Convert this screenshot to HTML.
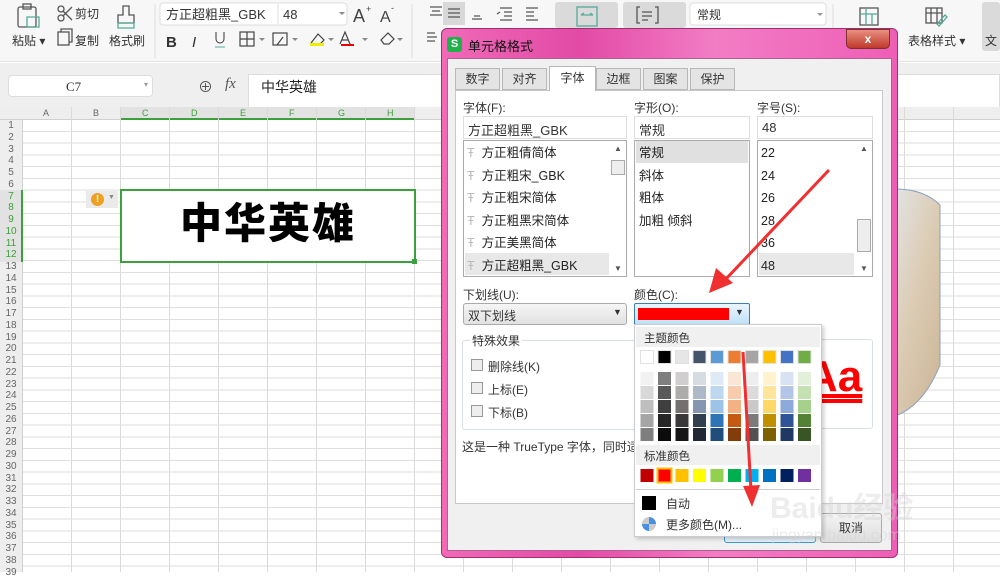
<!DOCTYPE html>
<html><head><meta charset="utf-8"><style>
*{box-sizing:border-box;margin:0;padding:0}
body{width:1000px;height:572px;overflow:hidden;position:relative;background:#fff;font-family:"Liberation Sans","Noto Sans CJK SC",sans-serif;font-size:12px;color:#333}
.a{position:absolute}
.t{position:absolute;white-space:nowrap}
</style></head><body>
<!-- ribbon -->
<div class="a" style="left:0;top:0;width:1000px;height:62px;background:#f7f7f7;border-bottom:1px solid #e3e3e3"></div>
<svg class="a" style="left:0;top:0" width="1000" height="62">
<g fill="none" stroke="#555" stroke-width="1.3">
<rect x="18" y="7" width="18" height="20" rx="2"/><rect x="23" y="4" width="8" height="5"/>
<path d="M27 17h12v10h-12z" stroke="#5a9"/>
<circle cx="61" cy="18" r="3"/><circle cx="61" cy="9" r="3"/><path d="M63 16l9-9M63 11l9 9"/>
<rect x="58" y="32" width="11" height="13"/><path d="M61 32v-3h11v13h-3"/>
<path d="M123 6h6v9h5v8h-16v-8h5z"/><path d="M118 23h16v5h-16z" stroke="#5a9"/>
<path d="M430 7h12M432 11h8M430 15h12"/><rect x="443" y="2" width="22" height="23" fill="#d8d8d8" stroke="none"/><path d="M448 9h12M448 13h12M448 17h12"/>
<path d="M474 16h6M472 19h10"/><path d="M500 8h12M504 12h8M504 16h8M500 20h12M497 14l3-2"/><path d="M526 8h12M526 12h8M526 16h8M526 20h12"/>
<path d="M427 33h8M427 37h10M427 41h8"/>
</g>
<rect x="555" y="2" width="63" height="26" rx="3" fill="#dadada"/><rect x="623" y="2" width="63" height="26" rx="3" fill="#dadada"/>
<g fill="none" stroke="#5a9" stroke-width="1.3"><rect x="577" y="7" width="20" height="19"/><path d="M581 15h12M581 15l3-2M593 15l-3-2"/></g>
<g fill="none" stroke="#555" stroke-width="1.3"><path d="M640 7h-3v16h3M655 7h3v16h-3M642 12h10M642 16h10M642 20h6"/></g>
<rect x="160" y="3" width="187" height="22" rx="3" fill="#fff" stroke="#ddd"/><line x1="278" y1="4" x2="278" y2="24" stroke="#ddd"/>
<text x="166" y="19" font-size="13" fill="#333">方正超粗黑_GBK</text><text x="283" y="19" font-size="13" fill="#333">48</text>
<text x="353" y="22" font-size="18" fill="#444">A</text><text x="366" y="12" font-size="9" fill="#444">+</text>
<text x="380" y="22" font-size="16" fill="#444">A</text><text x="391" y="11" font-size="9" fill="#444">-</text>
<text x="166" y="47" font-size="15" font-weight="bold" fill="#333">B</text><text x="192" y="47" font-size="15" font-style="italic" fill="#333">I</text>
<path d="M216 32v7a4 4 0 0 0 8 0v-7" fill="none" stroke="#333"/><path d="M215 47h10" stroke="#5a9"/>
<g fill="none" stroke="#444" stroke-width="1.2"><rect x="240" y="32" width="14" height="14"/><path d="M247 32v14M240 39h14"/><rect x="273" y="33" width="14" height="12"/><path d="M277 45l6-8"/><path d="M311 43l7-9 6 6-4 4"/><path d="M340 44l5-12 5 12M342 40h6"/><path d="M381 40l7-7 6 6-5 5h-5z"/></g>
<rect x="310" y="43" width="14" height="3" fill="#ee0"/><rect x="341" y="44" width="13" height="2" fill="#e00"/>
<g fill="#888"><path d="M259 38l3 3 3-3z"/><path d="M292 38l3 3 3-3z"/><path d="M328 38l3 3 3-3z"/><path d="M362 38l3 3 3-3z"/><path d="M397 38l3 3 3-3z"/><path d="M339 12l3 3 3-3z"/></g>
<line x1="155" y1="4" x2="155" y2="58" stroke="#ddd"/><line x1="412" y1="4" x2="412" y2="58" stroke="#ddd"/><line x1="833" y1="4" x2="833" y2="58" stroke="#ddd"/>
<rect x="690" y="3" width="136" height="22" rx="3" fill="#fff" stroke="#ddd"/><text x="697" y="19" font-size="12" fill="#333">常规</text><path d="M817 13l3 3 3-3z" fill="#999"/>
<g fill="none" stroke="#555" stroke-width="1.3"><rect x="860" y="8" width="18" height="17"/><path d="M860 14h18M866 8v17M872 14v11" stroke="#5a9"/><rect x="926" y="8" width="16" height="15"/><path d="M926 13h16M931 8v15M937 8v15"/><path d="M937 24l8-9 2 2-8 9z" stroke="#5a9"/></g>
<rect x="982" y="2" width="18" height="49" rx="3" fill="#dadada"/>
<text x="12" y="45" font-size="12" fill="#333">粘贴 ▾</text><text x="75" y="18" font-size="12" fill="#333">剪切</text><text x="75" y="45" font-size="12" fill="#333">复制</text><text x="109" y="45" font-size="12" fill="#333">格式刷</text>
<text x="908" y="45" font-size="12" fill="#333">表格样式 ▾</text><text x="985" y="45" font-size="12" fill="#333">文</text>
</svg>
<!-- formula bar -->
<div class="a" style="left:0;top:63px;width:1000px;height:45px;background:#efefef"></div>
<div class="a" style="left:8px;top:75px;width:145px;height:22px;background:#fff;border:1px solid #ddd;border-radius:4px"></div>
<div class="t" style="left:66px;top:79px;font-family:'Liberation Serif',serif;font-size:13px">C7</div><div class="t" style="left:144px;top:80px;font-size:8px;color:#999">▾</div>
<div class="t" style="left:198px;top:76px;font-size:15px;color:#555">⊕</div><div class="t" style="left:225px;top:76px;font-size:15px;font-style:italic;color:#555;font-family:'Liberation Serif',serif">fx</div>
<div class="a" style="left:248px;top:74px;width:752px;height:36px;background:#fff;border:1px solid #ddd"></div>
<div class="t" style="left:261px;top:77px;font-size:14px;color:#222">中华英雄</div>
<!-- sheet -->
<div class="a" style="left:0;top:107px;width:1000px;height:13px;background:#eee;border-bottom:1px solid #d0d0d0"></div>
<div class="a" style="left:120px;top:107px;width:295px;height:13px;background:#e2e2e2;border-bottom:2px solid #3ca03c"></div>
<div class="a" style="left:0;top:120px;width:23px;height:452px;background:#eee;border-right:1px solid #d0d0d0"></div>
<div class="a" style="left:0;top:190px;width:23px;height:72px;background:#e2e2e2;border-right:2px solid #3ca03c"></div>
<div class="a" style="left:23px;top:107px;width:977px;height:465px;background-image:repeating-linear-gradient(to right,transparent 0 48px,#dadada 48px 49px)"></div>
<div class="a" style="left:23px;top:120px;width:977px;height:452px;background-image:repeating-linear-gradient(to bottom,transparent 0 10.75px,#dedede 10.75px 11.75px)"></div>
<div class="t" style="left:43px;top:108px;font-size:9px;color:#666">A</div><div class="t" style="left:93px;top:108px;font-size:9px;color:#666">B</div>
<div class="t" style="left:142px;top:108px;font-size:9px;color:#3ca03c">C</div><div class="t" style="left:191px;top:108px;font-size:9px;color:#3ca03c">D</div><div class="t" style="left:240px;top:108px;font-size:9px;color:#3ca03c">E</div><div class="t" style="left:289px;top:108px;font-size:9px;color:#3ca03c">F</div><div class="t" style="left:338px;top:108px;font-size:9px;color:#3ca03c">G</div><div class="t" style="left:387px;top:108px;font-size:9px;color:#3ca03c">H</div>
<div class="a" style="left:2px;top:120px;width:18px;font-size:10px;line-height:11.75px;text-align:center;color:#666">1<br>2<br>3<br>4<br>5<br>6<br><span style="color:#3ca03c">7<br>8<br>9<br>10<br>11<br>12</span><br>13<br>14<br>15<br>16<br>17<br>18<br>19<br>20<br>21<br>22<br>23<br>24<br>25<br>26<br>27<br>28<br>29<br>30<br>31<br>32<br>33<br>34<br>35<br>36<br>37<br>38<br>39</div>
<div class="a" style="left:120px;top:189px;width:296px;height:74px;background:#fff;border:2px solid #3ca03c"></div>
<div class="a" style="left:412px;top:259px;width:5px;height:5px;background:#3ca03c"></div>
<div class="t" style="left:120px;top:192px;width:296px;text-align:center;font-family:'Noto Sans CJK SC',sans-serif;font-weight:900;font-size:42px;line-height:58px;color:#000;letter-spacing:2px">中华英雄</div>
<div class="a" style="left:86px;top:191px;width:32px;height:17px;background:#eaeaea"></div>
<div class="a" style="left:91px;top:193px;width:13px;height:13px;border-radius:50%;background:#f0a020;color:#fff;font-size:10px;font-weight:bold;text-align:center;line-height:13px">!</div>
<div class="t" style="left:108px;top:194px;font-size:7px;color:#888">▼</div>
<!-- background image right -->
<svg class="a" style="left:880px;top:185px" width="120" height="240"><defs><linearGradient id="g" x1="0" y1="0" x2="1" y2="1"><stop offset="0" stop-color="#e4ebf3"/><stop offset=".5" stop-color="#dccdb6"/><stop offset="1" stop-color="#cbb394"/></linearGradient></defs><path d="M0 5 Q40 0 60 20 L60 180 Q40 230 0 235 Z" fill="url(#g)" stroke="#8aa0c0"/></svg>
<!-- dialog -->
<div class="a" style="left:441px;top:28px;width:457px;height:530px;border-radius:6px;background:linear-gradient(90deg,#f06ab8,#e24aa6 30%,#f27dc4 60%,#ee5eb6);border:1px solid #a03070"></div>
<div class="a" style="left:447px;top:58px;width:445px;height:493px;background:#f0f0f0;border:1px solid #b06090"></div>
<div class="a" style="left:447px;top:37px;width:15px;height:15px;border-radius:3px;background:#22b04a;color:#fff;font-weight:bold;font-size:11px;text-align:center;line-height:15px">S</div>
<div class="t" style="left:468px;top:36px;font-size:13px;color:#111">单元格格式</div>
<div class="a" style="left:846px;top:29px;width:44px;height:20px;border-radius:0 0 5px 5px;background:linear-gradient(#e89080,#c0392b);border:1px solid #803030;color:#fff;text-align:center;font-weight:bold;font-size:12px;line-height:18px">x</div>
<div class="a" style="left:455px;top:90px;width:428px;height:414px;background:#fff;border:1px solid #c8c8c8"></div>
<div class="a" style="left:455px;top:68px;width:45px;height:22px;background:#e4e4e4;border:1px solid #b8b8b8;text-align:center;line-height:20px">数字</div>
<div class="a" style="left:502px;top:68px;width:45px;height:22px;background:#e4e4e4;border:1px solid #b8b8b8;text-align:center;line-height:20px">对齐</div>
<div class="a" style="left:549px;top:66px;width:47px;height:25px;background:#fff;border:1px solid #b8b8b8;border-bottom:none;text-align:center;line-height:22px">字体</div>
<div class="a" style="left:596px;top:68px;width:45px;height:22px;background:#e4e4e4;border:1px solid #b8b8b8;text-align:center;line-height:20px">边框</div>
<div class="a" style="left:643px;top:68px;width:45px;height:22px;background:#e4e4e4;border:1px solid #b8b8b8;text-align:center;line-height:20px">图案</div>
<div class="a" style="left:690px;top:68px;width:45px;height:22px;background:#e4e4e4;border:1px solid #b8b8b8;text-align:center;line-height:20px">保护</div>
<div class="t" style="left:463px;top:99px">字体(F):</div><div class="t" style="left:634px;top:99px">字形(O):</div><div class="t" style="left:757px;top:99px">字号(S):</div>
<div class="a" style="left:463px;top:116px;width:164px;height:23px;border:1px solid #ddd;padding:3px 4px;font-size:13px">方正超粗黑_GBK</div>
<div class="a" style="left:634px;top:116px;width:116px;height:23px;border:1px solid #ddd;padding:3px 4px;font-size:13px">常规</div>
<div class="a" style="left:757px;top:116px;width:116px;height:23px;border:1px solid #ddd;padding:3px 4px;font-size:13px">48</div>
<div class="a" style="left:463px;top:140px;width:164px;height:137px;border:1px solid #aaa"></div>
<div class="a" style="left:465px;top:253px;width:144px;height:22px;background:#e8e8e8"></div>
<div class="a" style="left:611px;top:160px;width:14px;height:15px;background:#eee;border:1px solid #aaa"></div>
<div class="t" style="left:614px;top:144px;font-size:8px;color:#555">▲</div><div class="t" style="left:614px;top:264px;font-size:8px;color:#555">▼</div>
<div class="a" style="left:467px;top:142px;font-size:12.5px;line-height:22.5px;color:#222"><span style="color:#bbb">Ŧ</span>&nbsp; 方正粗倩简体<br><span style="color:#bbb">Ŧ</span>&nbsp; 方正粗宋_GBK<br><span style="color:#bbb">Ŧ</span>&nbsp; 方正粗宋简体<br><span style="color:#bbb">Ŧ</span>&nbsp; 方正粗黑宋简体<br><span style="color:#bbb">Ŧ</span>&nbsp; 方正美黑简体<br><span style="color:#bbb">Ŧ</span>&nbsp; 方正超粗黑_GBK</div>
<div class="a" style="left:634px;top:140px;width:116px;height:137px;border:1px solid #aaa"></div>
<div class="a" style="left:636px;top:141px;width:112px;height:22px;background:#e0e0e0"></div>
<div class="a" style="left:639px;top:142px;font-size:12.5px;line-height:22.5px;color:#222">常规<br>斜体<br>粗体<br>加粗 倾斜</div>
<div class="a" style="left:757px;top:140px;width:116px;height:137px;border:1px solid #aaa"></div>
<div class="a" style="left:759px;top:253px;width:95px;height:22px;background:#e8e8e8"></div>
<div class="a" style="left:857px;top:219px;width:14px;height:33px;background:#eee;border:1px solid #aaa"></div>
<div class="t" style="left:860px;top:144px;font-size:8px;color:#555">▲</div><div class="t" style="left:860px;top:264px;font-size:8px;color:#555">▼</div>
<div class="a" style="left:761px;top:142px;font-size:12.5px;line-height:22.5px;color:#222">22<br>24<br>26<br>28<br>36<br>48</div>
<div class="t" style="left:463px;top:286px">下划线(U):</div><div class="t" style="left:634px;top:286px">颜色(C):</div>
<div class="a" style="left:463px;top:303px;width:164px;height:22px;border:1px solid #aaa;border-radius:3px;background:linear-gradient(#f6f6f6,#e2e2e2);padding:3px 4px">双下划线</div>
<div class="t" style="left:613px;top:307px;font-size:9px">▼</div>
<div class="a" style="left:634px;top:303px;width:116px;height:22px;border:1px solid #3c7fb1;border-radius:2px;background:linear-gradient(#eaf6fd,#bfe2f8)"></div>
<div class="a" style="left:638px;top:308px;width:91px;height:12px;background:#f00"></div><div class="t" style="left:735px;top:307px;font-size:9px">▼</div>
<div class="a" style="left:462px;top:340px;width:180px;height:90px;border:1px solid #d5dfe5;border-radius:3px"></div>
<div class="t" style="left:470px;top:332px;background:#fff;padding:0 2px">特殊效果</div>
<div class="a" style="left:471px;top:359px;width:12px;height:12px;border:1px solid #999;background:#eee"></div><div class="t" style="left:488px;top:358px">删除线(K)</div>
<div class="a" style="left:471px;top:382px;width:12px;height:12px;border:1px solid #999;background:#eee"></div><div class="t" style="left:488px;top:381px">上标(E)</div>
<div class="a" style="left:471px;top:405px;width:12px;height:12px;border:1px solid #999;background:#eee"></div><div class="t" style="left:488px;top:404px">下标(B)</div>
<div class="a" style="left:650px;top:339px;width:223px;height:90px;border:1px solid #d5dfe5;border-radius:3px"></div>
<div class="t" style="left:806px;top:355px;font-family:'Liberation Sans',sans-serif;font-weight:bold;font-size:44px;line-height:44px;color:#f00;text-decoration:underline double">Aa</div>
<div class="t" style="left:462px;top:438px">这是一种 TrueType 字体，同时适用于屏幕和打印机。</div>
<div class="a" style="left:724px;top:513px;width:92px;height:30px;border:1px solid #3c9bd8;border-radius:3px;background:#e5f1fb"></div>
<div class="a" style="left:820px;top:513px;width:62px;height:30px;border:1px solid #aaa;border-radius:3px;background:linear-gradient(#f4f4f4,#ddd);text-align:center;line-height:28px">取消</div>
<!-- popup -->
<div class="a" style="left:634px;top:324px;width:188px;height:213px;background:#fff;border:1px solid #ccc;box-shadow:2px 2px 4px rgba(0,0,0,.2)"></div>
<div class="a" style="left:636px;top:327px;width:184px;height:20px;background:#f0f0f0"></div><div class="t" style="left:644px;top:330px;font-size:11.5px">主题颜色</div>
<div class="a" style="left:636px;top:445px;width:184px;height:20px;background:#f0f0f0"></div><div class="t" style="left:644px;top:448px;font-size:11.5px">标准颜色</div>
<div class="a" style="left:636px;top:489px;width:184px;height:1px;background:#ccc"></div>
<svg class="a" style="left:638px;top:348px" width="182" height="140">
<g stroke="#e0e0e0" stroke-width="1">
<rect x="2.5" y="2.5" width="13" height="13" fill="#fff"/><rect x="20" y="2.5" width="13" height="13" fill="#000"/><rect x="37.5" y="2.5" width="13" height="13" fill="#e7e6e6"/><rect x="55" y="2.5" width="13" height="13" fill="#44546a"/><rect x="72.5" y="2.5" width="13" height="13" fill="#5b9bd5"/><rect x="90" y="2.5" width="13" height="13" fill="#ed7d31"/><rect x="107.5" y="2.5" width="13" height="13" fill="#a5a5a5"/><rect x="125" y="2.5" width="13" height="13" fill="#ffc000"/><rect x="142.5" y="2.5" width="13" height="13" fill="#4472c4"/><rect x="160" y="2.5" width="13" height="13" fill="#70ad47"/>
</g>
<g>
<rect x="2.5" y="24" width="13" height="13" fill="#f2f2f2"/><rect x="20" y="24" width="13" height="13" fill="#7f7f7f"/><rect x="37.5" y="24" width="13" height="13" fill="#d0cece"/><rect x="55" y="24" width="13" height="13" fill="#d6dce4"/><rect x="72.5" y="24" width="13" height="13" fill="#deebf6"/><rect x="90" y="24" width="13" height="13" fill="#fbe5d5"/><rect x="107.5" y="24" width="13" height="13" fill="#ededed"/><rect x="125" y="24" width="13" height="13" fill="#fff2cc"/><rect x="142.5" y="24" width="13" height="13" fill="#d9e2f3"/><rect x="160" y="24" width="13" height="13" fill="#e2efd9"/>
<rect x="2.5" y="38" width="13" height="13" fill="#d8d8d8"/><rect x="20" y="38" width="13" height="13" fill="#595959"/><rect x="37.5" y="38" width="13" height="13" fill="#aeabab"/><rect x="55" y="38" width="13" height="13" fill="#adb9ca"/><rect x="72.5" y="38" width="13" height="13" fill="#bdd7ee"/><rect x="90" y="38" width="13" height="13" fill="#f7cbac"/><rect x="107.5" y="38" width="13" height="13" fill="#dbdbdb"/><rect x="125" y="38" width="13" height="13" fill="#fee599"/><rect x="142.5" y="38" width="13" height="13" fill="#b4c6e7"/><rect x="160" y="38" width="13" height="13" fill="#c5e0b3"/>
<rect x="2.5" y="52" width="13" height="13" fill="#bfbfbf"/><rect x="20" y="52" width="13" height="13" fill="#3f3f3f"/><rect x="37.5" y="52" width="13" height="13" fill="#757070"/><rect x="55" y="52" width="13" height="13" fill="#8496b0"/><rect x="72.5" y="52" width="13" height="13" fill="#9dc3e6"/><rect x="90" y="52" width="13" height="13" fill="#f4b183"/><rect x="107.5" y="52" width="13" height="13" fill="#c9c9c9"/><rect x="125" y="52" width="13" height="13" fill="#ffd965"/><rect x="142.5" y="52" width="13" height="13" fill="#8eaadb"/><rect x="160" y="52" width="13" height="13" fill="#a8d08d"/>
<rect x="2.5" y="66" width="13" height="13" fill="#a5a5a5"/><rect x="20" y="66" width="13" height="13" fill="#262626"/><rect x="37.5" y="66" width="13" height="13" fill="#3a3838"/><rect x="55" y="66" width="13" height="13" fill="#323f4f"/><rect x="72.5" y="66" width="13" height="13" fill="#2e75b5"/><rect x="90" y="66" width="13" height="13" fill="#c55a11"/><rect x="107.5" y="66" width="13" height="13" fill="#7b7b7b"/><rect x="125" y="66" width="13" height="13" fill="#bf9000"/><rect x="142.5" y="66" width="13" height="13" fill="#2f5496"/><rect x="160" y="66" width="13" height="13" fill="#538135"/>
<rect x="2.5" y="80" width="13" height="13" fill="#7f7f7f"/><rect x="20" y="80" width="13" height="13" fill="#0c0c0c"/><rect x="37.5" y="80" width="13" height="13" fill="#171616"/><rect x="55" y="80" width="13" height="13" fill="#222a35"/><rect x="72.5" y="80" width="13" height="13" fill="#1e4e79"/><rect x="90" y="80" width="13" height="13" fill="#833c0b"/><rect x="107.5" y="80" width="13" height="13" fill="#525252"/><rect x="125" y="80" width="13" height="13" fill="#7f6000"/><rect x="142.5" y="80" width="13" height="13" fill="#1f3864"/><rect x="160" y="80" width="13" height="13" fill="#375623"/>
</g>
<g>
<rect x="2.5" y="121" width="13" height="13" fill="#c00000"/><rect x="18.5" y="119.5" width="16" height="16" fill="#ffc000"/><rect x="20.5" y="121.5" width="12" height="12" fill="#f00"/><rect x="37.5" y="121" width="13" height="13" fill="#ffc000"/><rect x="55" y="121" width="13" height="13" fill="#ffff00"/><rect x="72.5" y="121" width="13" height="13" fill="#92d050"/><rect x="90" y="121" width="13" height="13" fill="#00b050"/><rect x="107.5" y="121" width="13" height="13" fill="#00b0f0"/><rect x="125" y="121" width="13" height="13" fill="#0070c0"/><rect x="142.5" y="121" width="13" height="13" fill="#002060"/><rect x="160" y="121" width="13" height="13" fill="#7030a0"/>
</g>
</svg>
<div class="a" style="left:642px;top:496px;width:14px;height:14px;background:#000"></div><div class="t" style="left:666px;top:495px;font-size:12px">自动</div>
<div class="a" style="left:642px;top:517px;width:14px;height:14px;border-radius:50%;background:conic-gradient(#4a8fe0 0 25%,#ccc 0 50%,#4a8fe0 0 75%,#ccc 0)"></div><div class="t" style="left:666px;top:516px;font-size:12px">更多颜色(M)...</div>
<!-- watermark -->
<div class="t" style="left:770px;top:483px;font-size:30px;color:rgba(210,210,210,.4);font-weight:bold">Baidu经验</div>
<div class="t" style="left:772px;top:527px;font-size:16px;color:rgba(210,210,210,.45)">jingyan.baidu.com</div>
<!-- arrows -->
<svg class="a" style="left:0;top:0" width="1000" height="572">
<path d="M829 170 L725 280" stroke="#f03030" stroke-width="3"/><path d="M709 293 L716 268 L733 283 Z" fill="#f03030"/>
<path d="M743 352 L751 490" stroke="#f03030" stroke-width="3"/><path d="M752 507 L743 486 L760 485 Z" fill="#f03030"/>
</svg>
</body></html>
